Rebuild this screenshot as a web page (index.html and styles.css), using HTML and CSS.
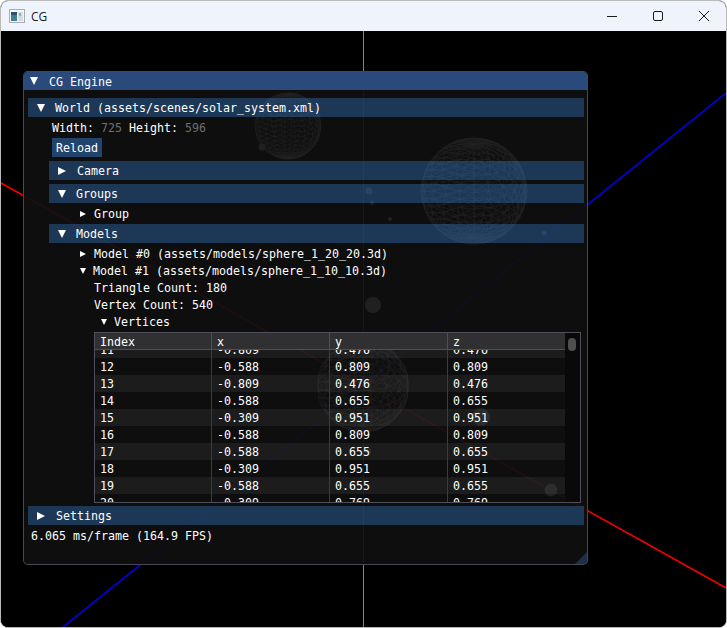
FILE: index.html
```html
<!DOCTYPE html>
<html lang="en">
<head>
<meta charset="utf-8">
<title>CG</title>
<link rel="stylesheet" href="styles.css">
</head>
<body>
<div class="app">
  <header class="titlebar">
    <div class="title-left">
      <svg class="app-icon" width="16" height="14" viewBox="0 0 16 14">
        <rect x="0.5" y="0.5" width="15" height="13" fill="#f4f6f8" stroke="#a9adb3"/>
        <rect x="2" y="3" width="6" height="9" fill="#3f7f8f"/>
        <rect x="2" y="3" width="6" height="3" fill="#2f4f6f"/>
        <rect x="9" y="3" width="5" height="9" fill="#d5dde0"/>
        <rect x="10" y="4" width="2" height="3" fill="#8fb3a8"/>
      </svg>
      <span class="title-text">CG</span>
    </div>
    <div class="caption">
      <svg class="caption-btn" width="46" height="30" viewBox="0 0 46 30"><path d="M18 15.5H28" stroke="#1a1a1a" fill="none"/></svg>
      <svg class="caption-btn" width="46" height="30" viewBox="0 0 46 30"><rect x="18.5" y="10.5" width="9" height="9" rx="1.5" stroke="#1a1a1a" fill="none"/></svg>
      <svg class="caption-btn" width="46" height="30" viewBox="0 0 46 30"><path d="M18 10L28 20M28 10L18 20" stroke="#1a1a1a" fill="none"/></svg>
    </div>
  </header>
  <main class="viewport">
    <svg class="scene" width="725" height="596" viewBox="1 31 725 596">
      <line x1="363.5" y1="31" x2="363.5" y2="627" stroke="#00e000" stroke-width="1"/>
      <line x1="1" y1="183" x2="726" y2="588" stroke="#f00000" stroke-width="1.6"/>
      <line x1="63" y1="627" x2="726" y2="93" stroke="#0000f0" stroke-width="1.6"/>
      <g id="spheres" fill="none" stroke="#fff" stroke-width="0.8"></g>
      <g fill="#fff">
        <circle cx="373" cy="305" r="8"/>
        <circle cx="551" cy="490" r="6.5"/>
        <circle cx="481" cy="417" r="9"/>
        <circle cx="369" cy="191" r="3.5"/>
        <circle cx="372" cy="203" r="2"/>
        <circle cx="390" cy="219" r="2"/>
        <circle cx="544" cy="233" r="2.5"/>
        <circle cx="262" cy="147" r="3.5"/>
        <circle cx="368" cy="451" r="3"/>
      </g>
    </svg>

    <section class="panel">
      <div class="panel-title"><i class="tri down"></i><span>CG Engine</span></div>
      <div class="panel-body">
        <div class="hdr hdr-top"><i class="tri down"></i><span>World (assets/scenes/solar_system.xml)</span></div>
        <div class="world">
          <div class="row info"><span>Width:</span> <span class="dim">725</span> <span>Height:</span> <span class="dim">596</span></div>
          <button class="btn">Reload</button>
          <div class="hdr"><i class="tri right"></i><span>Camera</span></div>
          <div class="hdr"><i class="tri down"></i><span>Groups</span></div>
          <div class="row node"><i class="tri small right"></i><span>Group</span></div>
          <div class="hdr"><i class="tri down"></i><span>Models</span></div>
          <div class="row node"><i class="tri small right"></i><span>Model #0 (assets/models/sphere_1_20_20.3d)</span></div>
          <div class="row node"><i class="tri small down"></i><span>Model #1 (assets/models/sphere_1_10_10.3d)</span></div>
          <div class="row leaf">Triangle Count: 180</div>
          <div class="row leaf">Vertex Count: 540</div>
          <div class="row node sub"><i class="tri small down"></i><span>Vertices</span></div>
          <div class="table">
            <div class="table-main">
              <div class="cols thead"><span>Index</span><span>x</span><span>y</span><span>z</span></div>
              <div class="tbody">
                <div class="rows">
                  <div class="cols"><span>11</span><span>-0.809</span><span>0.476</span><span>0.476</span></div>
                  <div class="cols"><span>12</span><span>-0.588</span><span>0.809</span><span>0.809</span></div>
                  <div class="cols"><span>13</span><span>-0.809</span><span>0.476</span><span>0.476</span></div>
                  <div class="cols"><span>14</span><span>-0.588</span><span>0.655</span><span>0.655</span></div>
                  <div class="cols"><span>15</span><span>-0.309</span><span>0.951</span><span>0.951</span></div>
                  <div class="cols"><span>16</span><span>-0.588</span><span>0.809</span><span>0.809</span></div>
                  <div class="cols"><span>17</span><span>-0.588</span><span>0.655</span><span>0.655</span></div>
                  <div class="cols"><span>18</span><span>-0.309</span><span>0.951</span><span>0.951</span></div>
                  <div class="cols"><span>19</span><span>-0.588</span><span>0.655</span><span>0.655</span></div>
                  <div class="cols"><span>20</span><span>-0.309</span><span>0.769</span><span>0.769</span></div>
                </div>
              </div>
            </div>
            <div class="scrollbar"><div class="grab"></div></div>
          </div>
        </div>
        <div class="hdr hdr-top"><i class="tri right"></i><span>Settings</span></div>
        <div class="row fps">6.065 ms/frame (164.9 FPS)</div>
      </div>
      <div class="grip"></div>
    </section>
  </main>
</div>
<script src="scene.js"></script>
</body>
</html>
```

FILE: styles.css
```css
* { box-sizing: border-box; }
html, body { margin: 0; padding: 0; background: #fff; }
.app {
  width: 727px; height: 628px;
  display: flex; flex-direction: column;
  border: 1px solid #b9b9b9;
  border-radius: 8px;
  overflow: hidden;
  background: #000;
}
.titlebar {
  height: 30px; flex: none;
  background: #eff3fb;
  display: flex; justify-content: space-between; align-items: center;
}
.title-left { display: flex; align-items: center; padding-left: 8px; gap: 6px; }
.app-icon { display: block; }
.title-text { font: 12px "Open Sans", "Liberation Sans", sans-serif; color: #1a1a1a; }
.caption { display: flex; margin-right: -1px; }
.caption-btn { display: block; }

.viewport { flex: 1; position: relative; background: #000; overflow: hidden; }
.scene { position: absolute; left: 0; top: 0; display: block; }

.panel {
  position: absolute; left: 22px; top: 40px;
  width: 565px; height: 494px;
  background: rgba(15, 15, 15, 0.93);
  border: 1px solid rgba(110, 110, 128, 0.6);
  border-radius: 5px;
  font: 11.63px/13px "DejaVu Sans Mono", "Liberation Mono", monospace;
  color: #fff;
  overflow: hidden;
}
.panel-title {
  height: 18px;
  background: #294a7a;
  display: flex; align-items: center; gap: 11px;
  padding-left: 6px;
}
.panel-title > span, .hdr > span, .node > span { padding-top: 2px; }
.panel-body {
  padding: 8px 3px 0 4px;
  display: flex; flex-direction: column; gap: 4px;
}
.world { display: flex; flex-direction: column; gap: 4px; padding-left: 21px; }
.hdr {
  height: 19px; flex: none;
  background: rgba(66, 150, 250, 0.31);
  display: flex; align-items: center; gap: 10px;
  padding-left: 9px;
}
.row { height: 13px; flex: none; white-space: pre; padding-top: 1px; }
.info { padding-left: 3px; }
.dim { color: #6f6f6f; }
.btn {
  width: 50px; height: 19px; margin: 0 0 0 3px; padding: 2px 0 0;
  border: 0; background: rgba(66, 150, 250, 0.4);
  color: #fff; font: inherit; text-align: center;
}
.node { display: flex; align-items: center; gap: 7px; padding: 0 0 0 31px; }
.node.sub { padding-left: 52px; }
.leaf { padding-left: 45px; }
.fps { padding-left: 3px; }

.tri { display: block; width: 0; height: 0; flex: none; border-style: solid; border-color: transparent; }
.tri.down { border-width: 8px 4.5px 0; border-top-color: #fff; }
.tri.right { border-width: 4.5px 0 4.5px 8px; border-left-color: #fff; margin-right: 1px; }
.tri.small.down { border-width: 6px 3.5px 0; }
.tri.small.right { border-width: 3.5px 0 3.5px 6px; margin-right: 1px; }

.table {
  margin: 0 0 -1px 45px;
  width: 487px; height: 171px; flex: none;
  border: 1px solid #4f4f59;
  display: flex;
}
.table-main { flex: 1; min-width: 0; display: flex; flex-direction: column; }
.cols {
  display: grid;
  grid-template-columns: 117px 118px 118px 1fr;
  height: 17px;
}
.cols > span {
  padding: 3px 0 0 5px;
  border-right: 1px solid #3b3b40;
  white-space: pre;
}
.cols > span:last-child { border-right: 0; }
.thead { background: #303033; border-bottom: 1px solid #4f4f59; flex: none; }
.thead > span { border-right-color: #4f4f59; }
.tbody { flex: 1; overflow: hidden; }
.rows { margin-top: -9px; }
.rows .cols:nth-child(odd) { background: rgba(255, 255, 255, 0.06); }
.scrollbar { width: 15px; flex: none; background: rgba(5, 5, 5, 0.53); padding: 5px 4px 0 3px; }
.grab { height: 13px; width: 8px; border-radius: 4px; background: #4f4f4f; }

.grip {
  position: absolute; right: 0; bottom: 0;
  width: 12px; height: 12px;
  background: rgba(66, 150, 250, 0.25);
  clip-path: polygon(100% 0, 100% 100%, 0 100%);
}
```

FILE: scene.js
```js
// Wireframe spheres of the scene, drawn as projected triangle meshes.
(function () {
  var spheres = [
    { cx: 474, cy: 191, r: 53, n: 20, tilt: 0.5, spin: 0.3, op: 0.75 },
    { cx: 288, cy: 126, r: 33, n: 20, tilt: 0.35, spin: 0.1, op: 0.5 },
    { cx: 363, cy: 386, r: 46, n: 16, tilt: 0.5, spin: 0.2, op: 0.6 }
  ];
  var root = document.getElementById('spheres');
  var NS = 'http://www.w3.org/2000/svg';
  spheres.forEach(function (s) {
    function pt(i, j) {
      var th = Math.PI * i / s.n;
      var ph = 2 * Math.PI * j / s.n + s.spin;
      var x = Math.sin(th) * Math.cos(ph);
      var y = Math.cos(th);
      var z = Math.sin(th) * Math.sin(ph);
      var y2 = y * Math.cos(s.tilt) - z * Math.sin(s.tilt);
      return (s.cx + s.r * x).toFixed(1) + ' ' + (s.cy - s.r * y2).toFixed(1);
    }
    var d = '';
    for (var i = 0; i < s.n; i++) {
      for (var j = 0; j < s.n; j++) {
        d += 'M' + pt(i, j) + 'L' + pt(i + 1, j) + 'L' + pt(i + 1, j + 1) + 'L' + pt(i, j);
      }
    }
    var p = document.createElementNS(NS, 'path');
    p.setAttribute('d', d);
    p.setAttribute('stroke-opacity', s.op);
    root.appendChild(p);
  });
})();
```
